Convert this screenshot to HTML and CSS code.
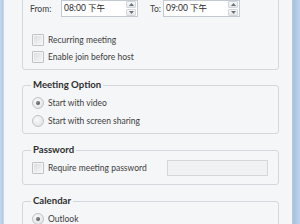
FILE: index.html
```html
<!DOCTYPE html>
<html lang="en">
<head>
<meta charset="utf-8">
<title>Schedule Meeting</title>
<link rel="stylesheet" href="styles.css">
</head>
<body>
<div class="window">
  <div class="edge-left"></div>
  <div class="client">
    <fieldset class="group group-time">
      <div class="time-row">
        <span class="lbl lbl-from">From:</span>
        <div class="spin-input">
          <span class="val">08:00 下午</span>
          <span class="spinner">
            <span class="sp-btn"><svg width="5" height="3" viewBox="0 0 5 3"><path d="M0 3 L2.5 0 L5 3 Z" fill="#6b7178"/></svg></span>
            <span class="sp-btn"><svg width="5" height="3" viewBox="0 0 5 3"><path d="M0 0 L2.5 3 L5 0 Z" fill="#6b7178"/></svg></span>
          </span>
        </div>
        <span class="lbl lbl-to">To:</span>
        <div class="spin-input">
          <span class="val">09:00 下午</span>
          <span class="spinner">
            <span class="sp-btn"><svg width="5" height="3" viewBox="0 0 5 3"><path d="M0 3 L2.5 0 L5 3 Z" fill="#6b7178"/></svg></span>
            <span class="sp-btn"><svg width="5" height="3" viewBox="0 0 5 3"><path d="M0 0 L2.5 3 L5 0 Z" fill="#6b7178"/></svg></span>
          </span>
        </div>
      </div>
      <div class="options">
        <div class="opt opt-tight"><span class="check"></span>Recurring meeting</div>
        <div class="opt opt-tight"><span class="check"></span>Enable join before host</div>
      </div>
    </fieldset>

    <fieldset class="group">
      <legend>Meeting Option</legend>
      <div class="opt"><span class="radio on"></span>Start with video</div>
      <div class="opt"><span class="radio"></span>Start with screen sharing</div>
    </fieldset>

    <fieldset class="group group-pw">
      <legend>Password</legend>
      <div class="opt"><span class="check"></span>Require meeting password<span class="pw-input"></span></div>
    </fieldset>

    <fieldset class="group">
      <legend>Calendar</legend>
      <div class="opt"><span class="radio on"></span>Outlook</div>
    </fieldset>
  </div>
  <div class="edge-right"></div>
</div>
</body>
</html>
```

FILE: styles.css
```css
html, body {
  margin: 0;
  padding: 0;
}
body {
  width: 300px;
  height: 224px;
  overflow: hidden;
  background: #f5f6f8;
  font-family: "Lato", "Noto Sans CJK SC", sans-serif;
  font-size: 8.5px;
  color: #3d3d3d;
}
.window {
  display: flex;
  height: 224px;
}
.edge-left {
  width: 3px;
  background: linear-gradient(90deg, #c6d8ed, #adc8e7);
  border-right: 1px solid #cfd6de;
}
.client {
  flex: 1;
  min-width: 0;
  display: flex;
  flex-direction: column;
  overflow: hidden;
  background: #f5f6f8;
  border-right: 1px solid #bcc6d2;
}
.edge-right {
  width: 7px;
  background: linear-gradient(90deg, #a4c1e4, #bed3ed);
}
.group {
  border: 1px solid #d3d8de;
  border-radius: 3px;
  padding: 1px 10px 3px 8px;
  margin: 8px 13px 0 18px;
  min-width: 0;
  flex: none;
}
.group legend {
  padding: 0 2px;
  font-size: 9.6px;
  font-weight: bold;
  line-height: 16px;
  color: #2f2f2f;
}
.group-time {
  margin-top: -12px;
  padding-top: 11px;
  padding-bottom: 4px;
}
.group-time + .group {
  margin-top: 7px;
}
.group-pw {
  padding-bottom: 7px;
}
.time-row {
  display: flex;
  align-items: center;
  height: 17px;
}
.lbl-from {
  width: 31px;
  margin-left: -1px;
}
.lbl-to {
  width: 13px;
  margin-left: 12px;
}
.spin-input {
  width: 77px;
  height: 17px;
  box-sizing: border-box;
  border: 1px solid #c4cad2;
  background: #fff;
  display: flex;
  align-items: stretch;
  padding: 0 0 0 2px;
  color: #2a2a2a;
}
.spin-input .val {
  flex: 1;
  line-height: 15px;
}
.spinner {
  width: 10px;
  display: flex;
  flex-direction: column;
  gap: 1px;
  padding: 0 1px 0 0;
}
.sp-btn {
  flex: 1;
  display: flex;
  align-items: center;
  justify-content: center;
  border: 1px solid #d3d7dc;
  border-radius: 1px;
  background: linear-gradient(180deg, #f7f8f9, #e4e7ea);
}
.options {
  margin-top: 14px;
}
.opt {
  display: flex;
  align-items: center;
  height: 18px;
  white-space: nowrap;
}
.opt-tight {
  height: 17px;
}
.check, .radio {
  flex: none;
  box-sizing: border-box;
  width: 12px;
  height: 12px;
  margin: 0 4px 0 1px;
  border: 1px solid #bfc3c8;
  background: linear-gradient(135deg, #d9dcdf, #f7f8f9);
}
.check {
  border-radius: 1px;
  box-shadow: inset 0 0 0 1px #f4f5f6;
}
.radio {
  border-radius: 50%;
  background: radial-gradient(circle at 40% 35%, #f9f9fa, #dcdfe2);
  display: flex;
  align-items: center;
  justify-content: center;
}
.radio.on::after {
  content: "";
  width: 4px;
  height: 4px;
  border-radius: 50%;
  background: radial-gradient(circle at 35% 35%, #8a8e93, #3e4247);
}
.pw-input {
  margin-left: auto;
  width: 101px;
  height: 16px;
  box-sizing: border-box;
  border: 1px solid #d4d8dd;
  background: #f0f1f3;
}
```
